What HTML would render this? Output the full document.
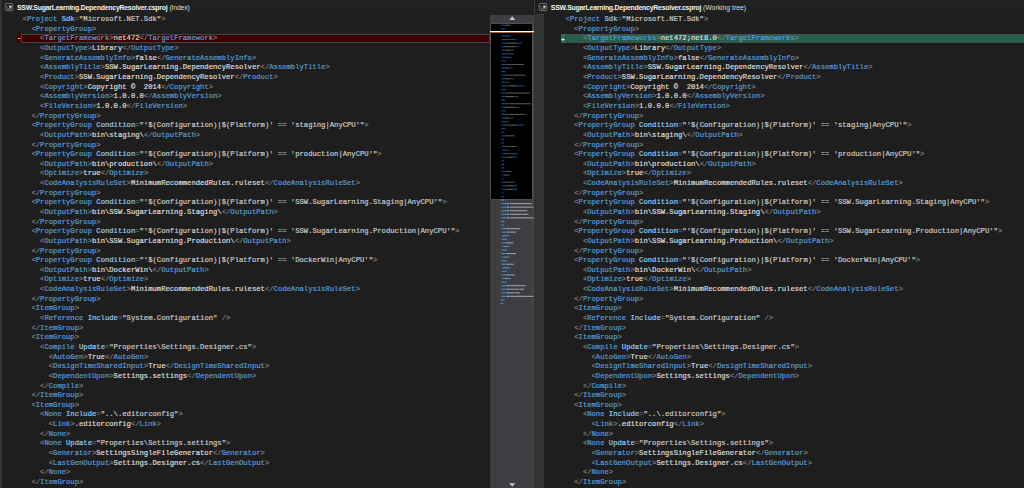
<!DOCTYPE html>
<html lang="en">
<head>
<meta charset="utf-8">
<title>SSW.SugarLearning.DependencyResolver.csproj diff</title>
<style>
html,body{margin:0;padding:0;background:#1e1e1e;}
body{width:1024px;height:488px;overflow:hidden;position:relative;font-family:"Liberation Sans",sans-serif;}
.abs{position:absolute;}
#lhead,#rhead{position:absolute;top:0;height:14.5px;background:#202020;}
#lhead{left:0;width:534px;}
#rhead{left:535px;width:489px;}
#split{position:absolute;left:533.5px;top:0;width:1.5px;height:14.5px;background:#393939;}
.title{position:absolute;top:0;height:14.5px;line-height:15.4px;font-size:6.9px;color:#f4f4f4;white-space:pre;letter-spacing:-0.223px;}
.title strong{font-weight:bold;}
.title span{font-weight:normal;color:#dedede;margin-left:2px;letter-spacing:-0.19px;}
.title span.w{letter-spacing:-0.03px;margin-left:1.7px;}
.ico{position:absolute;top:2px;width:10px;height:10px;}
.code{position:absolute;top:15.2px;font-family:"Liberation Mono",monospace;font-size:7.21px;line-height:9.652px;color:#dcdcdc;}
.code .l{height:9.652px;white-space:pre;-webkit-text-stroke:0.2px;}
.code i,.code b,.code u,.code s{font-style:normal;font-weight:normal;text-decoration:none;}
.code i{color:#808080;}
.code b{color:#569cd6;}
.code u{color:#92caf4;}
.code s{color:#c8c8c8;}
#lcode{left:22.8px;}
#rcode{left:565.6px;}
#lstrip{position:absolute;left:0;top:0;width:1.5px;height:488px;background:#333;}
#rstrip{position:absolute;left:534px;top:14.5px;width:10.2px;height:474px;background:#333;}
#delmark{position:absolute;left:16.9px;top:34px;width:5px;height:9.4px;background:#480000;}
#delline{position:absolute;left:21.4px;top:33.9px;width:468.6px;height:9.3px;box-sizing:border-box;background:#3c0000;border:0.9px solid #3f4444;border-bottom-width:1.1px;}
#addmark{position:absolute;left:560.5px;top:34px;width:5px;height:9.3px;background:#2a6c54;}
#addline{position:absolute;left:565.1px;top:33.9px;width:460px;height:9.3px;box-sizing:border-box;background:#265e4d;border-top:0.9px solid #4a4e4c;border-bottom:1.2px solid #484a4a;border-left:0.8px solid #3a4a44;}
.mk{position:absolute;font-family:"Liberation Mono",monospace;font-size:6.2px;line-height:9.6px;top:35.3px;color:#ecdcb8;-webkit-text-stroke:0.2px;}
.dash{position:absolute;top:44px;height:0.8px;background:repeating-linear-gradient(90deg,#161616 0,#161616 0.9px,transparent 0.9px,transparent 1.6px);}
#rdots{position:absolute;left:536.5px;top:14.4px;width:7.5px;height:0.7px;background:repeating-linear-gradient(90deg,#5a5a5a 0,#5a5a5a 0.8px,transparent 0.8px,transparent 2px);}
#sb{position:absolute;left:490px;top:14.5px;width:44px;height:473.5px;background:#3e3e42;overflow:hidden;}
#sbr{position:absolute;left:41.6px;top:0;width:2.4px;height:473.5px;background:#424548;}
#thumb{position:absolute;left:0;top:8.2px;width:43.3px;height:177px;box-sizing:border-box;background:#000;border:0.8px solid #4a5254;border-radius:1.5px;}
#caret{position:absolute;left:0;top:16.4px;width:43.6px;height:1.3px;background:#fff;border-bottom:0.7px solid #a0602a;}
</style>
</head>
<body>
<div id="lhead"></div>
<div id="rhead"></div>
<div id="split"></div>
<svg class="ico" style="left:4.0px" viewBox="0 0 10 10"><rect x="0.3" y="0.6" width="9.4" height="9" rx="1.2" fill="#141414"/><rect x="1.15" y="1.45" width="7.7" height="7.2" rx="0.9" fill="#1d1d1d" stroke="#9a9a9a" stroke-width="0.7"/><path d="M3.6 3.6L2.5 4.7L3.6 5.8" fill="none" stroke="#8aa0b4" stroke-width="0.7"/><rect x="5.2" y="3.6" width="2.4" height="2.1" fill="#dedad0"/><rect x="2.6" y="6.55" width="5" height="0.7" fill="#b0b0b0"/></svg>
<div class="title" style="left:17px"><strong>SSW.SugarLearning.DependencyResolver.csproj</strong><span>(Index)</span></div>
<svg class="ico" style="left:537.5px" viewBox="0 0 10 10"><rect x="0.3" y="0.6" width="9.4" height="9" rx="1.2" fill="#141414"/><rect x="1.15" y="1.45" width="7.7" height="7.2" rx="0.9" fill="#1d1d1d" stroke="#9a9a9a" stroke-width="0.7"/><path d="M3.6 3.6L2.5 4.7L3.6 5.8" fill="none" stroke="#8aa0b4" stroke-width="0.7"/><rect x="5.2" y="3.6" width="2.4" height="2.1" fill="#dedad0"/><rect x="2.6" y="6.55" width="5" height="0.7" fill="#b0b0b0"/></svg>
<div class="title" style="left:550.8px"><strong>SSW.SugarLearning.DependencyResolver.csproj</strong><span class="w">(Working tree)</span></div>
<div id="lstrip"></div>
<div id="rstrip"></div>
<div id="delmark"></div><div id="delline"></div>
<div id="addmark"></div><div id="addline"></div>
<div class="dash" style="left:21.4px;width:468.6px"></div><div class="dash" style="left:565px;width:459px"></div><div id="rdots"></div>
<div class="mk" style="left:17.1px;top:33.8px;font-size:7px">-</div>
<div class="mk" style="left:560.95px;color:#f2f2f2">+</div>
<div class="code" id="lcode">
<div class="l"><i>&lt;</i><b>Project</b> <u>Sdk</u><i>=</i><s>"Microsoft.NET.Sdk"</s><i>&gt;</i></div>
<div class="l">  <i>&lt;</i><b>PropertyGroup</b><i>&gt;</i></div>
<div class="l">    <i>&lt;</i><b>TargetFramework</b><i>&gt;</i>net472<i>&lt;/</i><b>TargetFramework</b><i>&gt;</i></div>
<div class="l">    <i>&lt;</i><b>OutputType</b><i>&gt;</i>Library<i>&lt;/</i><b>OutputType</b><i>&gt;</i></div>
<div class="l">    <i>&lt;</i><b>GenerateAssemblyInfo</b><i>&gt;</i>false<i>&lt;/</i><b>GenerateAssemblyInfo</b><i>&gt;</i></div>
<div class="l">    <i>&lt;</i><b>AssemblyTitle</b><i>&gt;</i>SSW.SugarLearning.DependencyResolver<i>&lt;/</i><b>AssemblyTitle</b><i>&gt;</i></div>
<div class="l">    <i>&lt;</i><b>Product</b><i>&gt;</i>SSW.SugarLearning.DependencyResolver<i>&lt;/</i><b>Product</b><i>&gt;</i></div>
<div class="l">    <i>&lt;</i><b>Copyright</b><i>&gt;</i>Copyright ©  2014<i>&lt;/</i><b>Copyright</b><i>&gt;</i></div>
<div class="l">    <i>&lt;</i><b>AssemblyVersion</b><i>&gt;</i>1.0.0.0<i>&lt;/</i><b>AssemblyVersion</b><i>&gt;</i></div>
<div class="l">    <i>&lt;</i><b>FileVersion</b><i>&gt;</i>1.0.0.0<i>&lt;/</i><b>FileVersion</b><i>&gt;</i></div>
<div class="l">  <i>&lt;/</i><b>PropertyGroup</b><i>&gt;</i></div>
<div class="l">  <i>&lt;</i><b>PropertyGroup</b> <u>Condition</u><i>=</i><s>"'$(Configuration)|$(Platform)' == 'staging|AnyCPU'"</s><i>&gt;</i></div>
<div class="l">    <i>&lt;</i><b>OutputPath</b><i>&gt;</i>bin\staging\<i>&lt;/</i><b>OutputPath</b><i>&gt;</i></div>
<div class="l">  <i>&lt;/</i><b>PropertyGroup</b><i>&gt;</i></div>
<div class="l">  <i>&lt;</i><b>PropertyGroup</b> <u>Condition</u><i>=</i><s>"'$(Configuration)|$(Platform)' == 'production|AnyCPU'"</s><i>&gt;</i></div>
<div class="l">    <i>&lt;</i><b>OutputPath</b><i>&gt;</i>bin\production\<i>&lt;/</i><b>OutputPath</b><i>&gt;</i></div>
<div class="l">    <i>&lt;</i><b>Optimize</b><i>&gt;</i>true<i>&lt;/</i><b>Optimize</b><i>&gt;</i></div>
<div class="l">    <i>&lt;</i><b>CodeAnalysisRuleSet</b><i>&gt;</i>MinimumRecommendedRules.ruleset<i>&lt;/</i><b>CodeAnalysisRuleSet</b><i>&gt;</i></div>
<div class="l">  <i>&lt;/</i><b>PropertyGroup</b><i>&gt;</i></div>
<div class="l">  <i>&lt;</i><b>PropertyGroup</b> <u>Condition</u><i>=</i><s>"'$(Configuration)|$(Platform)' == 'SSW.SugarLearning.Staging|AnyCPU'"</s><i>&gt;</i></div>
<div class="l">    <i>&lt;</i><b>OutputPath</b><i>&gt;</i>bin\SSW.SugarLearning.Staging\<i>&lt;/</i><b>OutputPath</b><i>&gt;</i></div>
<div class="l">  <i>&lt;/</i><b>PropertyGroup</b><i>&gt;</i></div>
<div class="l">  <i>&lt;</i><b>PropertyGroup</b> <u>Condition</u><i>=</i><s>"'$(Configuration)|$(Platform)' == 'SSW.SugarLearning.Production|AnyCPU'"</s><i>&gt;</i></div>
<div class="l">    <i>&lt;</i><b>OutputPath</b><i>&gt;</i>bin\SSW.SugarLearning.Production\<i>&lt;/</i><b>OutputPath</b><i>&gt;</i></div>
<div class="l">  <i>&lt;/</i><b>PropertyGroup</b><i>&gt;</i></div>
<div class="l">  <i>&lt;</i><b>PropertyGroup</b> <u>Condition</u><i>=</i><s>"'$(Configuration)|$(Platform)' == 'DockerWin|AnyCPU'"</s><i>&gt;</i></div>
<div class="l">    <i>&lt;</i><b>OutputPath</b><i>&gt;</i>bin\DockerWin\<i>&lt;/</i><b>OutputPath</b><i>&gt;</i></div>
<div class="l">    <i>&lt;</i><b>Optimize</b><i>&gt;</i>true<i>&lt;/</i><b>Optimize</b><i>&gt;</i></div>
<div class="l">    <i>&lt;</i><b>CodeAnalysisRuleSet</b><i>&gt;</i>MinimumRecommendedRules.ruleset<i>&lt;/</i><b>CodeAnalysisRuleSet</b><i>&gt;</i></div>
<div class="l">  <i>&lt;/</i><b>PropertyGroup</b><i>&gt;</i></div>
<div class="l">  <i>&lt;</i><b>ItemGroup</b><i>&gt;</i></div>
<div class="l">    <i>&lt;</i><b>Reference</b> <u>Include</u><i>=</i><s>"System.Configuration"</s><i> /&gt;</i></div>
<div class="l">  <i>&lt;/</i><b>ItemGroup</b><i>&gt;</i></div>
<div class="l">  <i>&lt;</i><b>ItemGroup</b><i>&gt;</i></div>
<div class="l">    <i>&lt;</i><b>Compile</b> <u>Update</u><i>=</i><s>"Properties\Settings.Designer.cs"</s><i>&gt;</i></div>
<div class="l">      <i>&lt;</i><b>AutoGen</b><i>&gt;</i>True<i>&lt;/</i><b>AutoGen</b><i>&gt;</i></div>
<div class="l">      <i>&lt;</i><b>DesignTimeSharedInput</b><i>&gt;</i>True<i>&lt;/</i><b>DesignTimeSharedInput</b><i>&gt;</i></div>
<div class="l">      <i>&lt;</i><b>DependentUpon</b><i>&gt;</i>Settings.settings<i>&lt;/</i><b>DependentUpon</b><i>&gt;</i></div>
<div class="l">    <i>&lt;/</i><b>Compile</b><i>&gt;</i></div>
<div class="l">  <i>&lt;/</i><b>ItemGroup</b><i>&gt;</i></div>
<div class="l">  <i>&lt;</i><b>ItemGroup</b><i>&gt;</i></div>
<div class="l">    <i>&lt;</i><b>None</b> <u>Include</u><i>=</i><s>"..\.editorconfig"</s><i>&gt;</i></div>
<div class="l">      <i>&lt;</i><b>Link</b><i>&gt;</i>.editorconfig<i>&lt;/</i><b>Link</b><i>&gt;</i></div>
<div class="l">    <i>&lt;/</i><b>None</b><i>&gt;</i></div>
<div class="l">    <i>&lt;</i><b>None</b> <u>Update</u><i>=</i><s>"Properties\Settings.settings"</s><i>&gt;</i></div>
<div class="l">      <i>&lt;</i><b>Generator</b><i>&gt;</i>SettingsSingleFileGenerator<i>&lt;/</i><b>Generator</b><i>&gt;</i></div>
<div class="l">      <i>&lt;</i><b>LastGenOutput</b><i>&gt;</i>Settings.Designer.cs<i>&lt;/</i><b>LastGenOutput</b><i>&gt;</i></div>
<div class="l">    <i>&lt;/</i><b>None</b><i>&gt;</i></div>
<div class="l">  <i>&lt;/</i><b>ItemGroup</b><i>&gt;</i></div>
</div>
<div class="code" id="rcode">
<div class="l"><i>&lt;</i><b>Project</b> <u>Sdk</u><i>=</i><s>"Microsoft.NET.Sdk"</s><i>&gt;</i></div>
<div class="l">  <i>&lt;</i><b>PropertyGroup</b><i>&gt;</i></div>
<div class="l">    <i>&lt;</i><b>TargetFrameworks</b><i>&gt;</i>net472;net8.0<i>&lt;/</i><b>TargetFrameworks</b><i>&gt;</i></div>
<div class="l">    <i>&lt;</i><b>OutputType</b><i>&gt;</i>Library<i>&lt;/</i><b>OutputType</b><i>&gt;</i></div>
<div class="l">    <i>&lt;</i><b>GenerateAssemblyInfo</b><i>&gt;</i>false<i>&lt;/</i><b>GenerateAssemblyInfo</b><i>&gt;</i></div>
<div class="l">    <i>&lt;</i><b>AssemblyTitle</b><i>&gt;</i>SSW.SugarLearning.DependencyResolver<i>&lt;/</i><b>AssemblyTitle</b><i>&gt;</i></div>
<div class="l">    <i>&lt;</i><b>Product</b><i>&gt;</i>SSW.SugarLearning.DependencyResolver<i>&lt;/</i><b>Product</b><i>&gt;</i></div>
<div class="l">    <i>&lt;</i><b>Copyright</b><i>&gt;</i>Copyright ©  2014<i>&lt;/</i><b>Copyright</b><i>&gt;</i></div>
<div class="l">    <i>&lt;</i><b>AssemblyVersion</b><i>&gt;</i>1.0.0.0<i>&lt;/</i><b>AssemblyVersion</b><i>&gt;</i></div>
<div class="l">    <i>&lt;</i><b>FileVersion</b><i>&gt;</i>1.0.0.0<i>&lt;/</i><b>FileVersion</b><i>&gt;</i></div>
<div class="l">  <i>&lt;/</i><b>PropertyGroup</b><i>&gt;</i></div>
<div class="l">  <i>&lt;</i><b>PropertyGroup</b> <u>Condition</u><i>=</i><s>"'$(Configuration)|$(Platform)' == 'staging|AnyCPU'"</s><i>&gt;</i></div>
<div class="l">    <i>&lt;</i><b>OutputPath</b><i>&gt;</i>bin\staging\<i>&lt;/</i><b>OutputPath</b><i>&gt;</i></div>
<div class="l">  <i>&lt;/</i><b>PropertyGroup</b><i>&gt;</i></div>
<div class="l">  <i>&lt;</i><b>PropertyGroup</b> <u>Condition</u><i>=</i><s>"'$(Configuration)|$(Platform)' == 'production|AnyCPU'"</s><i>&gt;</i></div>
<div class="l">    <i>&lt;</i><b>OutputPath</b><i>&gt;</i>bin\production\<i>&lt;/</i><b>OutputPath</b><i>&gt;</i></div>
<div class="l">    <i>&lt;</i><b>Optimize</b><i>&gt;</i>true<i>&lt;/</i><b>Optimize</b><i>&gt;</i></div>
<div class="l">    <i>&lt;</i><b>CodeAnalysisRuleSet</b><i>&gt;</i>MinimumRecommendedRules.ruleset<i>&lt;/</i><b>CodeAnalysisRuleSet</b><i>&gt;</i></div>
<div class="l">  <i>&lt;/</i><b>PropertyGroup</b><i>&gt;</i></div>
<div class="l">  <i>&lt;</i><b>PropertyGroup</b> <u>Condition</u><i>=</i><s>"'$(Configuration)|$(Platform)' == 'SSW.SugarLearning.Staging|AnyCPU'"</s><i>&gt;</i></div>
<div class="l">    <i>&lt;</i><b>OutputPath</b><i>&gt;</i>bin\SSW.SugarLearning.Staging\<i>&lt;/</i><b>OutputPath</b><i>&gt;</i></div>
<div class="l">  <i>&lt;/</i><b>PropertyGroup</b><i>&gt;</i></div>
<div class="l">  <i>&lt;</i><b>PropertyGroup</b> <u>Condition</u><i>=</i><s>"'$(Configuration)|$(Platform)' == 'SSW.SugarLearning.Production|AnyCPU'"</s><i>&gt;</i></div>
<div class="l">    <i>&lt;</i><b>OutputPath</b><i>&gt;</i>bin\SSW.SugarLearning.Production\<i>&lt;/</i><b>OutputPath</b><i>&gt;</i></div>
<div class="l">  <i>&lt;/</i><b>PropertyGroup</b><i>&gt;</i></div>
<div class="l">  <i>&lt;</i><b>PropertyGroup</b> <u>Condition</u><i>=</i><s>"'$(Configuration)|$(Platform)' == 'DockerWin|AnyCPU'"</s><i>&gt;</i></div>
<div class="l">    <i>&lt;</i><b>OutputPath</b><i>&gt;</i>bin\DockerWin\<i>&lt;/</i><b>OutputPath</b><i>&gt;</i></div>
<div class="l">    <i>&lt;</i><b>Optimize</b><i>&gt;</i>true<i>&lt;/</i><b>Optimize</b><i>&gt;</i></div>
<div class="l">    <i>&lt;</i><b>CodeAnalysisRuleSet</b><i>&gt;</i>MinimumRecommendedRules.ruleset<i>&lt;/</i><b>CodeAnalysisRuleSet</b><i>&gt;</i></div>
<div class="l">  <i>&lt;/</i><b>PropertyGroup</b><i>&gt;</i></div>
<div class="l">  <i>&lt;</i><b>ItemGroup</b><i>&gt;</i></div>
<div class="l">    <i>&lt;</i><b>Reference</b> <u>Include</u><i>=</i><s>"System.Configuration"</s><i> /&gt;</i></div>
<div class="l">  <i>&lt;/</i><b>ItemGroup</b><i>&gt;</i></div>
<div class="l">  <i>&lt;</i><b>ItemGroup</b><i>&gt;</i></div>
<div class="l">    <i>&lt;</i><b>Compile</b> <u>Update</u><i>=</i><s>"Properties\Settings.Designer.cs"</s><i>&gt;</i></div>
<div class="l">      <i>&lt;</i><b>AutoGen</b><i>&gt;</i>True<i>&lt;/</i><b>AutoGen</b><i>&gt;</i></div>
<div class="l">      <i>&lt;</i><b>DesignTimeSharedInput</b><i>&gt;</i>True<i>&lt;/</i><b>DesignTimeSharedInput</b><i>&gt;</i></div>
<div class="l">      <i>&lt;</i><b>DependentUpon</b><i>&gt;</i>Settings.settings<i>&lt;/</i><b>DependentUpon</b><i>&gt;</i></div>
<div class="l">    <i>&lt;/</i><b>Compile</b><i>&gt;</i></div>
<div class="l">  <i>&lt;/</i><b>ItemGroup</b><i>&gt;</i></div>
<div class="l">  <i>&lt;</i><b>ItemGroup</b><i>&gt;</i></div>
<div class="l">    <i>&lt;</i><b>None</b> <u>Include</u><i>=</i><s>"..\.editorconfig"</s><i>&gt;</i></div>
<div class="l">      <i>&lt;</i><b>Link</b><i>&gt;</i>.editorconfig<i>&lt;/</i><b>Link</b><i>&gt;</i></div>
<div class="l">    <i>&lt;/</i><b>None</b><i>&gt;</i></div>
<div class="l">    <i>&lt;</i><b>None</b> <u>Update</u><i>=</i><s>"Properties\Settings.settings"</s><i>&gt;</i></div>
<div class="l">      <i>&lt;</i><b>Generator</b><i>&gt;</i>SettingsSingleFileGenerator<i>&lt;/</i><b>Generator</b><i>&gt;</i></div>
<div class="l">      <i>&lt;</i><b>LastGenOutput</b><i>&gt;</i>Settings.Designer.cs<i>&lt;/</i><b>LastGenOutput</b><i>&gt;</i></div>
<div class="l">    <i>&lt;/</i><b>None</b><i>&gt;</i></div>
<div class="l">  <i>&lt;/</i><b>ItemGroup</b><i>&gt;</i></div>
</div>
<div id="sb">
<div id="sbr"></div>
<svg class="abs" style="left:18.8px;top:1.6px;width:6.4px;height:4.4px" viewBox="0 0 6.4 4.4"><path d="M3.2 0.3L6.2 4.1H0.2Z" fill="#c8c8c8"/></svg>
<div id="thumb"></div>
<svg class="abs" style="left:0;top:0;width:44px;height:473.5px" viewBox="0 0 44 473.5">
<rect x="10.30" y="9.70" width="0.30" height="1.10" fill="#303030"/>
<rect x="10.61" y="9.70" width="2.13" height="1.10" fill="#1d4a85"/>
<rect x="13.05" y="9.70" width="0.92" height="1.10" fill="#35607f"/>
<rect x="13.96" y="9.70" width="0.30" height="1.10" fill="#303030"/>
<rect x="14.26" y="9.70" width="5.79" height="1.10" fill="#525252"/>
<rect x="20.06" y="9.70" width="0.30" height="1.10" fill="#303030"/>
<rect x="10.91" y="13.27" width="0.30" height="1.10" fill="#303030"/>
<rect x="11.22" y="13.27" width="3.96" height="1.10" fill="#1d4a85"/>
<rect x="15.18" y="13.27" width="0.30" height="1.10" fill="#303030"/>
<rect x="11.52" y="16.83" width="0.30" height="1.10" fill="#303030"/>
<rect x="11.82" y="16.83" width="4.58" height="1.10" fill="#1d4a85"/>
<rect x="16.40" y="16.83" width="0.30" height="1.10" fill="#303030"/>
<rect x="16.70" y="16.83" width="1.83" height="1.10" fill="#5c5c5c"/>
<rect x="18.54" y="16.83" width="0.61" height="1.10" fill="#303030"/>
<rect x="19.15" y="16.83" width="4.58" height="1.10" fill="#1d4a85"/>
<rect x="23.72" y="16.83" width="0.30" height="1.10" fill="#303030"/>
<rect x="11.52" y="20.40" width="0.30" height="1.10" fill="#303030"/>
<rect x="11.82" y="20.40" width="3.05" height="1.10" fill="#1d4a85"/>
<rect x="14.88" y="20.40" width="0.30" height="1.10" fill="#303030"/>
<rect x="15.18" y="20.40" width="2.13" height="1.10" fill="#5c5c5c"/>
<rect x="17.31" y="20.40" width="0.61" height="1.10" fill="#303030"/>
<rect x="17.93" y="20.40" width="3.05" height="1.10" fill="#1d4a85"/>
<rect x="20.98" y="20.40" width="0.30" height="1.10" fill="#303030"/>
<rect x="11.52" y="23.97" width="0.30" height="1.10" fill="#303030"/>
<rect x="11.82" y="23.97" width="6.10" height="1.10" fill="#1d4a85"/>
<rect x="17.93" y="23.97" width="0.30" height="1.10" fill="#303030"/>
<rect x="18.23" y="23.97" width="1.52" height="1.10" fill="#5c5c5c"/>
<rect x="19.75" y="23.97" width="0.61" height="1.10" fill="#303030"/>
<rect x="20.37" y="23.97" width="6.10" height="1.10" fill="#1d4a85"/>
<rect x="26.47" y="23.97" width="0.30" height="1.10" fill="#303030"/>
<rect x="11.52" y="27.54" width="0.30" height="1.10" fill="#303030"/>
<rect x="11.82" y="27.54" width="3.96" height="1.10" fill="#1d4a85"/>
<rect x="15.79" y="27.54" width="0.30" height="1.10" fill="#303030"/>
<rect x="16.10" y="27.54" width="10.98" height="1.10" fill="#5c5c5c"/>
<rect x="27.08" y="27.54" width="0.61" height="1.10" fill="#303030"/>
<rect x="27.69" y="27.54" width="3.96" height="1.10" fill="#1d4a85"/>
<rect x="31.65" y="27.54" width="0.30" height="1.10" fill="#303030"/>
<rect x="11.52" y="31.10" width="0.30" height="1.10" fill="#303030"/>
<rect x="11.82" y="31.10" width="2.13" height="1.10" fill="#1d4a85"/>
<rect x="13.96" y="31.10" width="0.30" height="1.10" fill="#303030"/>
<rect x="14.26" y="31.10" width="10.98" height="1.10" fill="#5c5c5c"/>
<rect x="25.25" y="31.10" width="0.61" height="1.10" fill="#303030"/>
<rect x="25.86" y="31.10" width="2.13" height="1.10" fill="#1d4a85"/>
<rect x="27.99" y="31.10" width="0.30" height="1.10" fill="#303030"/>
<rect x="11.52" y="34.67" width="0.30" height="1.10" fill="#303030"/>
<rect x="11.82" y="34.67" width="2.75" height="1.10" fill="#1d4a85"/>
<rect x="14.57" y="34.67" width="0.30" height="1.10" fill="#303030"/>
<rect x="14.88" y="34.67" width="5.18" height="1.10" fill="#5c5c5c"/>
<rect x="20.06" y="34.67" width="0.61" height="1.10" fill="#303030"/>
<rect x="20.67" y="34.67" width="2.75" height="1.10" fill="#1d4a85"/>
<rect x="23.41" y="34.67" width="0.30" height="1.10" fill="#303030"/>
<rect x="11.52" y="38.24" width="0.30" height="1.10" fill="#303030"/>
<rect x="11.82" y="38.24" width="4.58" height="1.10" fill="#1d4a85"/>
<rect x="16.40" y="38.24" width="0.30" height="1.10" fill="#303030"/>
<rect x="16.70" y="38.24" width="2.13" height="1.10" fill="#5c5c5c"/>
<rect x="18.84" y="38.24" width="0.61" height="1.10" fill="#303030"/>
<rect x="19.45" y="38.24" width="4.58" height="1.10" fill="#1d4a85"/>
<rect x="24.02" y="38.24" width="0.30" height="1.10" fill="#303030"/>
<rect x="11.52" y="41.80" width="0.30" height="1.10" fill="#303030"/>
<rect x="11.82" y="41.80" width="3.35" height="1.10" fill="#1d4a85"/>
<rect x="15.18" y="41.80" width="0.30" height="1.10" fill="#303030"/>
<rect x="15.49" y="41.80" width="2.13" height="1.10" fill="#5c5c5c"/>
<rect x="17.62" y="41.80" width="0.61" height="1.10" fill="#303030"/>
<rect x="18.23" y="41.80" width="3.35" height="1.10" fill="#1d4a85"/>
<rect x="21.59" y="41.80" width="0.30" height="1.10" fill="#303030"/>
<rect x="10.91" y="45.37" width="0.61" height="1.10" fill="#303030"/>
<rect x="11.52" y="45.37" width="3.96" height="1.10" fill="#1d4a85"/>
<rect x="15.49" y="45.37" width="0.30" height="1.10" fill="#303030"/>
<rect x="10.91" y="48.94" width="0.30" height="1.10" fill="#303030"/>
<rect x="11.22" y="48.94" width="3.96" height="1.10" fill="#1d4a85"/>
<rect x="15.49" y="48.94" width="2.75" height="1.10" fill="#35607f"/>
<rect x="18.23" y="48.94" width="0.30" height="1.10" fill="#303030"/>
<rect x="18.54" y="48.94" width="15.86" height="1.10" fill="#525252"/>
<rect x="34.39" y="48.94" width="0.30" height="1.10" fill="#303030"/>
<rect x="11.52" y="52.50" width="0.30" height="1.10" fill="#303030"/>
<rect x="11.82" y="52.50" width="3.05" height="1.10" fill="#1d4a85"/>
<rect x="14.88" y="52.50" width="0.30" height="1.10" fill="#303030"/>
<rect x="15.18" y="52.50" width="3.66" height="1.10" fill="#5c5c5c"/>
<rect x="18.84" y="52.50" width="0.61" height="1.10" fill="#303030"/>
<rect x="19.45" y="52.50" width="3.05" height="1.10" fill="#1d4a85"/>
<rect x="22.50" y="52.50" width="0.30" height="1.10" fill="#303030"/>
<rect x="10.91" y="56.07" width="0.61" height="1.10" fill="#303030"/>
<rect x="11.52" y="56.07" width="3.96" height="1.10" fill="#1d4a85"/>
<rect x="15.49" y="56.07" width="0.30" height="1.10" fill="#303030"/>
<rect x="10.91" y="59.64" width="0.30" height="1.10" fill="#303030"/>
<rect x="11.22" y="59.64" width="3.96" height="1.10" fill="#1d4a85"/>
<rect x="15.49" y="59.64" width="2.75" height="1.10" fill="#35607f"/>
<rect x="18.23" y="59.64" width="0.30" height="1.10" fill="#303030"/>
<rect x="18.54" y="59.64" width="16.77" height="1.10" fill="#525252"/>
<rect x="35.31" y="59.64" width="0.30" height="1.10" fill="#303030"/>
<rect x="11.52" y="63.20" width="0.30" height="1.10" fill="#303030"/>
<rect x="11.82" y="63.20" width="3.05" height="1.10" fill="#1d4a85"/>
<rect x="14.88" y="63.20" width="0.30" height="1.10" fill="#303030"/>
<rect x="15.18" y="63.20" width="4.58" height="1.10" fill="#5c5c5c"/>
<rect x="19.75" y="63.20" width="0.61" height="1.10" fill="#303030"/>
<rect x="20.37" y="63.20" width="3.05" height="1.10" fill="#1d4a85"/>
<rect x="23.41" y="63.20" width="0.30" height="1.10" fill="#303030"/>
<rect x="11.52" y="66.77" width="0.30" height="1.10" fill="#303030"/>
<rect x="11.82" y="66.77" width="2.44" height="1.10" fill="#1d4a85"/>
<rect x="14.26" y="66.77" width="0.30" height="1.10" fill="#303030"/>
<rect x="14.57" y="66.77" width="1.22" height="1.10" fill="#5c5c5c"/>
<rect x="15.79" y="66.77" width="0.61" height="1.10" fill="#303030"/>
<rect x="16.40" y="66.77" width="2.44" height="1.10" fill="#1d4a85"/>
<rect x="18.84" y="66.77" width="0.30" height="1.10" fill="#303030"/>
<rect x="11.52" y="70.34" width="0.30" height="1.10" fill="#303030"/>
<rect x="11.82" y="70.34" width="5.79" height="1.10" fill="#1d4a85"/>
<rect x="17.62" y="70.34" width="0.30" height="1.10" fill="#303030"/>
<rect x="17.93" y="70.34" width="9.46" height="1.10" fill="#5c5c5c"/>
<rect x="27.38" y="70.34" width="0.61" height="1.10" fill="#303030"/>
<rect x="27.99" y="70.34" width="5.79" height="1.10" fill="#1d4a85"/>
<rect x="33.78" y="70.34" width="0.30" height="1.10" fill="#303030"/>
<rect x="10.91" y="73.91" width="0.61" height="1.10" fill="#303030"/>
<rect x="11.52" y="73.91" width="3.96" height="1.10" fill="#1d4a85"/>
<rect x="15.49" y="73.91" width="0.30" height="1.10" fill="#303030"/>
<rect x="10.91" y="77.47" width="0.30" height="1.10" fill="#303030"/>
<rect x="11.22" y="77.47" width="3.96" height="1.10" fill="#1d4a85"/>
<rect x="15.49" y="77.47" width="2.75" height="1.10" fill="#35607f"/>
<rect x="18.23" y="77.47" width="0.30" height="1.10" fill="#303030"/>
<rect x="18.54" y="77.47" width="21.35" height="1.10" fill="#525252"/>
<rect x="39.88" y="77.47" width="0.30" height="1.10" fill="#303030"/>
<rect x="11.52" y="81.04" width="0.30" height="1.10" fill="#303030"/>
<rect x="11.82" y="81.04" width="3.05" height="1.10" fill="#1d4a85"/>
<rect x="14.88" y="81.04" width="0.30" height="1.10" fill="#303030"/>
<rect x="15.18" y="81.04" width="9.15" height="1.10" fill="#5c5c5c"/>
<rect x="24.33" y="81.04" width="0.61" height="1.10" fill="#303030"/>
<rect x="24.94" y="81.04" width="3.05" height="1.10" fill="#1d4a85"/>
<rect x="27.99" y="81.04" width="0.30" height="1.10" fill="#303030"/>
<rect x="10.91" y="84.61" width="0.61" height="1.10" fill="#303030"/>
<rect x="11.52" y="84.61" width="3.96" height="1.10" fill="#1d4a85"/>
<rect x="15.49" y="84.61" width="0.30" height="1.10" fill="#303030"/>
<rect x="10.91" y="88.17" width="0.30" height="1.10" fill="#303030"/>
<rect x="11.22" y="88.17" width="3.96" height="1.10" fill="#1d4a85"/>
<rect x="15.49" y="88.17" width="2.75" height="1.10" fill="#35607f"/>
<rect x="18.23" y="88.17" width="0.30" height="1.10" fill="#303030"/>
<rect x="18.54" y="88.17" width="22.27" height="1.10" fill="#525252"/>
<rect x="40.80" y="88.17" width="0.30" height="1.10" fill="#303030"/>
<rect x="11.52" y="91.74" width="0.30" height="1.10" fill="#303030"/>
<rect x="11.82" y="91.74" width="3.05" height="1.10" fill="#1d4a85"/>
<rect x="14.88" y="91.74" width="0.30" height="1.10" fill="#303030"/>
<rect x="15.18" y="91.74" width="10.06" height="1.10" fill="#5c5c5c"/>
<rect x="25.25" y="91.74" width="0.61" height="1.10" fill="#303030"/>
<rect x="25.86" y="91.74" width="3.05" height="1.10" fill="#1d4a85"/>
<rect x="28.90" y="91.74" width="0.30" height="1.10" fill="#303030"/>
<rect x="10.91" y="95.31" width="0.61" height="1.10" fill="#303030"/>
<rect x="11.52" y="95.31" width="3.96" height="1.10" fill="#1d4a85"/>
<rect x="15.49" y="95.31" width="0.30" height="1.10" fill="#303030"/>
<rect x="10.91" y="98.88" width="0.30" height="1.10" fill="#303030"/>
<rect x="11.22" y="98.88" width="3.96" height="1.10" fill="#1d4a85"/>
<rect x="15.49" y="98.88" width="2.75" height="1.10" fill="#35607f"/>
<rect x="18.23" y="98.88" width="0.30" height="1.10" fill="#303030"/>
<rect x="18.54" y="98.88" width="16.47" height="1.10" fill="#525252"/>
<rect x="35.00" y="98.88" width="0.30" height="1.10" fill="#303030"/>
<rect x="11.52" y="102.44" width="0.30" height="1.10" fill="#303030"/>
<rect x="11.82" y="102.44" width="3.05" height="1.10" fill="#1d4a85"/>
<rect x="14.88" y="102.44" width="0.30" height="1.10" fill="#303030"/>
<rect x="15.18" y="102.44" width="4.27" height="1.10" fill="#5c5c5c"/>
<rect x="19.45" y="102.44" width="0.61" height="1.10" fill="#303030"/>
<rect x="20.06" y="102.44" width="3.05" height="1.10" fill="#1d4a85"/>
<rect x="23.11" y="102.44" width="0.30" height="1.10" fill="#303030"/>
<rect x="11.52" y="106.01" width="0.30" height="1.10" fill="#303030"/>
<rect x="11.82" y="106.01" width="2.44" height="1.10" fill="#1d4a85"/>
<rect x="14.26" y="106.01" width="0.30" height="1.10" fill="#303030"/>
<rect x="14.57" y="106.01" width="1.22" height="1.10" fill="#5c5c5c"/>
<rect x="15.79" y="106.01" width="0.61" height="1.10" fill="#303030"/>
<rect x="16.40" y="106.01" width="2.44" height="1.10" fill="#1d4a85"/>
<rect x="18.84" y="106.01" width="0.30" height="1.10" fill="#303030"/>
<rect x="11.52" y="109.58" width="0.30" height="1.10" fill="#303030"/>
<rect x="11.82" y="109.58" width="5.79" height="1.10" fill="#1d4a85"/>
<rect x="17.62" y="109.58" width="0.30" height="1.10" fill="#303030"/>
<rect x="17.93" y="109.58" width="9.46" height="1.10" fill="#5c5c5c"/>
<rect x="27.38" y="109.58" width="0.61" height="1.10" fill="#303030"/>
<rect x="27.99" y="109.58" width="5.79" height="1.10" fill="#1d4a85"/>
<rect x="33.78" y="109.58" width="0.30" height="1.10" fill="#303030"/>
<rect x="10.91" y="113.14" width="0.61" height="1.10" fill="#303030"/>
<rect x="11.52" y="113.14" width="3.96" height="1.10" fill="#1d4a85"/>
<rect x="15.49" y="113.14" width="0.30" height="1.10" fill="#303030"/>
<rect x="10.91" y="116.71" width="0.30" height="1.10" fill="#303030"/>
<rect x="11.22" y="116.71" width="2.75" height="1.10" fill="#1d4a85"/>
<rect x="13.96" y="116.71" width="0.30" height="1.10" fill="#303030"/>
<rect x="11.52" y="120.28" width="0.30" height="1.10" fill="#303030"/>
<rect x="11.82" y="120.28" width="2.75" height="1.10" fill="#1d4a85"/>
<rect x="14.88" y="120.28" width="2.13" height="1.10" fill="#35607f"/>
<rect x="17.01" y="120.28" width="0.30" height="1.10" fill="#303030"/>
<rect x="17.31" y="120.28" width="6.71" height="1.10" fill="#525252"/>
<rect x="24.33" y="120.28" width="0.61" height="1.10" fill="#303030"/>
<rect x="10.91" y="123.84" width="0.61" height="1.10" fill="#303030"/>
<rect x="11.52" y="123.84" width="2.75" height="1.10" fill="#1d4a85"/>
<rect x="14.26" y="123.84" width="0.30" height="1.10" fill="#303030"/>
<rect x="10.91" y="127.41" width="0.30" height="1.10" fill="#303030"/>
<rect x="11.22" y="127.41" width="2.75" height="1.10" fill="#1d4a85"/>
<rect x="13.96" y="127.41" width="0.30" height="1.10" fill="#303030"/>
<rect x="11.52" y="130.98" width="0.30" height="1.10" fill="#303030"/>
<rect x="11.82" y="130.98" width="2.13" height="1.10" fill="#1d4a85"/>
<rect x="14.26" y="130.98" width="1.83" height="1.10" fill="#35607f"/>
<rect x="16.10" y="130.98" width="0.30" height="1.10" fill="#303030"/>
<rect x="16.40" y="130.98" width="10.06" height="1.10" fill="#525252"/>
<rect x="26.47" y="130.98" width="0.30" height="1.10" fill="#303030"/>
<rect x="12.13" y="134.54" width="0.30" height="1.10" fill="#303030"/>
<rect x="12.44" y="134.54" width="2.13" height="1.10" fill="#1d4a85"/>
<rect x="14.57" y="134.54" width="0.30" height="1.10" fill="#303030"/>
<rect x="14.88" y="134.54" width="1.22" height="1.10" fill="#5c5c5c"/>
<rect x="16.10" y="134.54" width="0.61" height="1.10" fill="#303030"/>
<rect x="16.70" y="134.54" width="2.13" height="1.10" fill="#1d4a85"/>
<rect x="18.84" y="134.54" width="0.30" height="1.10" fill="#303030"/>
<rect x="12.13" y="138.11" width="0.30" height="1.10" fill="#303030"/>
<rect x="12.44" y="138.11" width="6.41" height="1.10" fill="#1d4a85"/>
<rect x="18.84" y="138.11" width="0.30" height="1.10" fill="#303030"/>
<rect x="19.15" y="138.11" width="1.22" height="1.10" fill="#5c5c5c"/>
<rect x="20.37" y="138.11" width="0.61" height="1.10" fill="#303030"/>
<rect x="20.98" y="138.11" width="6.41" height="1.10" fill="#1d4a85"/>
<rect x="27.38" y="138.11" width="0.30" height="1.10" fill="#303030"/>
<rect x="12.13" y="141.68" width="0.30" height="1.10" fill="#303030"/>
<rect x="12.44" y="141.68" width="3.96" height="1.10" fill="#1d4a85"/>
<rect x="16.40" y="141.68" width="0.30" height="1.10" fill="#303030"/>
<rect x="16.70" y="141.68" width="5.18" height="1.10" fill="#5c5c5c"/>
<rect x="21.89" y="141.68" width="0.61" height="1.10" fill="#303030"/>
<rect x="22.50" y="141.68" width="3.96" height="1.10" fill="#1d4a85"/>
<rect x="26.47" y="141.68" width="0.30" height="1.10" fill="#303030"/>
<rect x="11.52" y="145.25" width="0.61" height="1.10" fill="#303030"/>
<rect x="12.13" y="145.25" width="2.13" height="1.10" fill="#1d4a85"/>
<rect x="14.26" y="145.25" width="0.30" height="1.10" fill="#303030"/>
<rect x="10.91" y="148.81" width="0.61" height="1.10" fill="#303030"/>
<rect x="11.52" y="148.81" width="2.75" height="1.10" fill="#1d4a85"/>
<rect x="14.26" y="148.81" width="0.30" height="1.10" fill="#303030"/>
<rect x="10.91" y="152.38" width="0.30" height="1.10" fill="#303030"/>
<rect x="11.22" y="152.38" width="2.75" height="1.10" fill="#1d4a85"/>
<rect x="13.96" y="152.38" width="0.30" height="1.10" fill="#303030"/>
<rect x="11.52" y="155.95" width="0.30" height="1.10" fill="#303030"/>
<rect x="11.82" y="155.95" width="1.22" height="1.10" fill="#1d4a85"/>
<rect x="13.35" y="155.95" width="2.13" height="1.10" fill="#35607f"/>
<rect x="15.49" y="155.95" width="0.30" height="1.10" fill="#303030"/>
<rect x="15.79" y="155.95" width="5.49" height="1.10" fill="#525252"/>
<rect x="21.28" y="155.95" width="0.30" height="1.10" fill="#303030"/>
<rect x="12.13" y="159.51" width="0.30" height="1.10" fill="#303030"/>
<rect x="12.44" y="159.51" width="1.22" height="1.10" fill="#1d4a85"/>
<rect x="13.66" y="159.51" width="0.30" height="1.10" fill="#303030"/>
<rect x="13.96" y="159.51" width="3.96" height="1.10" fill="#5c5c5c"/>
<rect x="17.93" y="159.51" width="0.61" height="1.10" fill="#303030"/>
<rect x="18.54" y="159.51" width="1.22" height="1.10" fill="#1d4a85"/>
<rect x="19.75" y="159.51" width="0.30" height="1.10" fill="#303030"/>
<rect x="11.52" y="163.08" width="0.61" height="1.10" fill="#303030"/>
<rect x="12.13" y="163.08" width="1.22" height="1.10" fill="#1d4a85"/>
<rect x="13.35" y="163.08" width="0.30" height="1.10" fill="#303030"/>
<rect x="11.52" y="166.65" width="0.30" height="1.10" fill="#303030"/>
<rect x="11.82" y="166.65" width="1.22" height="1.10" fill="#1d4a85"/>
<rect x="13.35" y="166.65" width="1.83" height="1.10" fill="#35607f"/>
<rect x="15.18" y="166.65" width="0.30" height="1.10" fill="#303030"/>
<rect x="15.49" y="166.65" width="9.15" height="1.10" fill="#525252"/>
<rect x="24.63" y="166.65" width="0.30" height="1.10" fill="#303030"/>
<rect x="12.13" y="170.22" width="0.30" height="1.10" fill="#303030"/>
<rect x="12.44" y="170.22" width="2.75" height="1.10" fill="#1d4a85"/>
<rect x="15.18" y="170.22" width="0.30" height="1.10" fill="#303030"/>
<rect x="15.49" y="170.22" width="8.23" height="1.10" fill="#5c5c5c"/>
<rect x="23.72" y="170.22" width="0.61" height="1.10" fill="#303030"/>
<rect x="24.33" y="170.22" width="2.75" height="1.10" fill="#1d4a85"/>
<rect x="27.08" y="170.22" width="0.30" height="1.10" fill="#303030"/>
<rect x="12.13" y="173.78" width="0.30" height="1.10" fill="#303030"/>
<rect x="12.44" y="173.78" width="3.96" height="1.10" fill="#1d4a85"/>
<rect x="16.40" y="173.78" width="0.30" height="1.10" fill="#303030"/>
<rect x="16.70" y="173.78" width="6.10" height="1.10" fill="#5c5c5c"/>
<rect x="22.81" y="173.78" width="0.61" height="1.10" fill="#303030"/>
<rect x="23.41" y="173.78" width="3.96" height="1.10" fill="#1d4a85"/>
<rect x="27.38" y="173.78" width="0.30" height="1.10" fill="#303030"/>
<rect x="11.52" y="177.35" width="0.61" height="1.10" fill="#303030"/>
<rect x="12.13" y="177.35" width="1.22" height="1.10" fill="#1d4a85"/>
<rect x="13.35" y="177.35" width="0.30" height="1.10" fill="#303030"/>
<rect x="10.91" y="180.92" width="0.61" height="1.10" fill="#303030"/>
<rect x="11.52" y="180.92" width="2.75" height="1.10" fill="#1d4a85"/>
<rect x="14.26" y="180.92" width="0.30" height="1.10" fill="#303030"/>
<rect x="11.10" y="184.48" width="3.30" height="1.10" fill="#4787c0"/>
<rect x="11.50" y="188.05" width="5.30" height="1.10" fill="#4787c0"/>
<rect x="16.90" y="188.05" width="2.40" height="1.10" fill="#86bde2"/>
<rect x="20.00" y="188.05" width="21.90" height="1.10" fill="#9c9ca0"/>
<rect x="11.50" y="191.62" width="5.30" height="1.10" fill="#4787c0"/>
<rect x="16.90" y="191.62" width="2.40" height="1.10" fill="#86bde2"/>
<rect x="20.00" y="191.62" width="23.60" height="1.10" fill="#9c9ca0"/>
<rect x="11.50" y="195.18" width="5.30" height="1.10" fill="#4787c0"/>
<rect x="16.90" y="195.18" width="2.40" height="1.10" fill="#86bde2"/>
<rect x="20.00" y="195.18" width="17.30" height="1.10" fill="#9c9ca0"/>
<rect x="11.50" y="198.75" width="5.30" height="1.10" fill="#4787c0"/>
<rect x="16.90" y="198.75" width="2.40" height="1.10" fill="#86bde2"/>
<rect x="20.00" y="198.75" width="18.60" height="1.10" fill="#9c9ca0"/>
<rect x="11.50" y="202.32" width="5.30" height="1.10" fill="#4787c0"/>
<rect x="16.90" y="202.32" width="2.40" height="1.10" fill="#86bde2"/>
<rect x="20.00" y="202.32" width="23.60" height="1.10" fill="#9c9ca0"/>
<rect x="11.10" y="205.88" width="3.30" height="1.10" fill="#4787c0"/>
<rect x="11.10" y="209.45" width="2.90" height="1.10" fill="#4787c0"/>
<rect x="11.50" y="213.02" width="5.30" height="1.10" fill="#4787c0"/>
<rect x="16.90" y="213.02" width="2.40" height="1.10" fill="#86bde2"/>
<rect x="19.80" y="213.02" width="8.10" height="1.10" fill="#9c9ca0"/>
<rect x="27.90" y="213.02" width="2.50" height="1.10" fill="#a89078"/>
<rect x="11.50" y="216.59" width="5.30" height="1.10" fill="#4787c0"/>
<rect x="17.20" y="216.59" width="2.10" height="1.10" fill="#86bde2"/>
<rect x="19.80" y="216.59" width="6.10" height="1.10" fill="#9c9ca0"/>
<rect x="12.10" y="220.15" width="2.70" height="1.10" fill="#4787c0"/>
<rect x="14.80" y="220.15" width="2.40" height="1.10" fill="#a89078"/>
<rect x="17.20" y="220.15" width="2.30" height="1.10" fill="#4787c0"/>
<rect x="11.50" y="223.72" width="5.50" height="1.10" fill="#4787c0"/>
<rect x="11.50" y="227.29" width="5.30" height="1.10" fill="#4787c0"/>
<rect x="16.90" y="227.29" width="2.40" height="1.10" fill="#86bde2"/>
<rect x="19.40" y="227.29" width="4.00" height="1.10" fill="#9c9ca0"/>
<rect x="12.10" y="230.85" width="2.70" height="1.10" fill="#4787c0"/>
<rect x="14.80" y="230.85" width="2.40" height="1.10" fill="#a89078"/>
<rect x="17.20" y="230.85" width="2.30" height="1.10" fill="#4787c0"/>
<rect x="11.50" y="234.42" width="5.50" height="1.10" fill="#4787c0"/>
<rect x="11.50" y="237.99" width="5.30" height="1.10" fill="#4787c0"/>
<rect x="16.90" y="237.99" width="2.40" height="1.10" fill="#86bde2"/>
<rect x="19.60" y="237.99" width="6.40" height="1.10" fill="#9c9ca0"/>
<rect x="12.10" y="241.56" width="2.70" height="1.10" fill="#4787c0"/>
<rect x="14.80" y="241.56" width="2.40" height="1.10" fill="#a89078"/>
<rect x="17.20" y="241.56" width="2.30" height="1.10" fill="#4787c0"/>
<rect x="11.50" y="245.12" width="5.50" height="1.10" fill="#4787c0"/>
<rect x="11.50" y="248.69" width="5.30" height="1.10" fill="#4787c0"/>
<rect x="16.90" y="248.69" width="2.40" height="1.10" fill="#86bde2"/>
<rect x="19.70" y="248.69" width="4.10" height="1.10" fill="#9c9ca0"/>
<rect x="12.10" y="252.26" width="2.70" height="1.10" fill="#4787c0"/>
<rect x="14.80" y="252.26" width="2.40" height="1.10" fill="#a89078"/>
<rect x="17.20" y="252.26" width="2.50" height="1.10" fill="#4787c0"/>
<rect x="11.50" y="255.82" width="5.50" height="1.10" fill="#4787c0"/>
<rect x="11.50" y="259.39" width="5.30" height="1.10" fill="#4787c0"/>
<rect x="16.90" y="259.39" width="2.40" height="1.10" fill="#86bde2"/>
<rect x="19.60" y="259.39" width="5.40" height="1.10" fill="#9c9ca0"/>
<rect x="12.10" y="262.96" width="2.70" height="1.10" fill="#4787c0"/>
<rect x="14.80" y="262.96" width="3.20" height="1.10" fill="#a89078"/>
<rect x="18.00" y="262.96" width="2.80" height="1.10" fill="#4787c0"/>
<rect x="11.50" y="266.52" width="5.50" height="1.10" fill="#4787c0"/>
<rect x="11.50" y="270.09" width="5.30" height="1.10" fill="#4787c0"/>
<rect x="16.90" y="270.09" width="2.40" height="1.10" fill="#86bde2"/>
<rect x="19.60" y="270.09" width="11.40" height="1.10" fill="#9c9ca0"/>
<rect x="31.40" y="270.09" width="2.00" height="1.10" fill="#86bde2"/>
<rect x="33.60" y="270.09" width="2.10" height="1.10" fill="#9c9ca0"/>
<rect x="11.50" y="273.66" width="5.30" height="1.10" fill="#4787c0"/>
<rect x="16.90" y="273.66" width="2.40" height="1.10" fill="#86bde2"/>
<rect x="19.60" y="273.66" width="9.80" height="1.10" fill="#9c9ca0"/>
<rect x="29.80" y="273.66" width="2.00" height="1.10" fill="#86bde2"/>
<rect x="32.00" y="273.66" width="2.00" height="1.10" fill="#9c9ca0"/>
<rect x="11.50" y="277.23" width="5.30" height="1.10" fill="#4787c0"/>
<rect x="16.90" y="277.23" width="2.40" height="1.10" fill="#86bde2"/>
<rect x="19.60" y="277.23" width="5.80" height="1.10" fill="#9c9ca0"/>
<rect x="25.80" y="277.23" width="2.00" height="1.10" fill="#86bde2"/>
<rect x="28.00" y="277.23" width="2.00" height="1.10" fill="#9c9ca0"/>
<rect x="11.50" y="280.79" width="5.30" height="1.10" fill="#4787c0"/>
<rect x="16.90" y="280.79" width="2.40" height="1.10" fill="#86bde2"/>
<rect x="19.60" y="280.79" width="14.80" height="1.10" fill="#9c9ca0"/>
<rect x="34.80" y="280.79" width="2.00" height="1.10" fill="#86bde2"/>
<rect x="37.00" y="280.79" width="6.60" height="1.10" fill="#9c9ca0"/>
<rect x="11.10" y="284.36" width="3.30" height="1.10" fill="#4787c0"/>
<rect x="10.50" y="287.93" width="2.70" height="1.10" fill="#4787c0"/>
</svg>
<div id="caret"></div>
<svg class="abs" style="left:18.8px;top:468.4px;width:6.4px;height:4px" viewBox="0 0 6.4 4"><path d="M3.2 3.8L6.2 0.2H0.2Z" fill="#c8c8c8"/></svg>
</div>
</body>
</html>
